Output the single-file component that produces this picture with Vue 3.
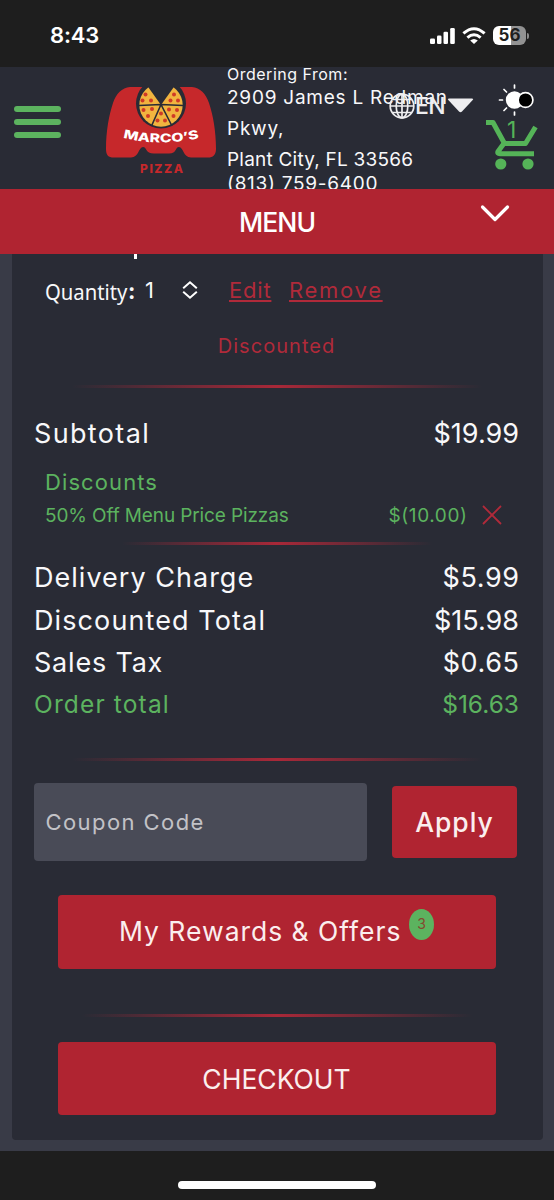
<script setup>
const charges = [
  { label: 'Delivery Charge', amount: '$5.99', cls: 'delivery' },
  { label: 'Discounted Total', amount: '$15.98', cls: 'discounted' },
  { label: 'Sales Tax', amount: '$0.65', cls: 'tax' },
]
const pepperoni = [
  [40.5, 8.5], [37.5, 14.5], [46, 14.5], [38.5, 24], [47, 23], [43, 30], [56, 27.5], [52.5, 34.5],
  [60, 34.5], [64, 23.5], [72, 24], [68.5, 30], [69, 8.5], [65.5, 14.5], [73, 14.5],
]
</script>

<template>
  <div class="screen">
    <div class="status">
      <span class="clock">8:43</span>
      <div class="status-icons">
        <svg class="signal" width="26" height="18" viewBox="0 0 26 18" fill="#fff">
          <rect x="0" y="11.5" width="5" height="5.5" rx="1.3" />
          <rect x="7" y="8.5" width="4.5" height="8.5" rx="1.3" />
          <rect x="13.5" y="4.8" width="4.5" height="12.2" rx="1.3" />
          <rect x="20.2" y="1" width="4.6" height="16" rx="1.3" />
        </svg>
        <svg class="wifi" width="24" height="18" viewBox="0 0 24 18" fill="none" stroke="#fff" stroke-width="3">
          <path d="M1.4 6.4Q12-3 22.6 6.4" />
          <path d="M5.4 10.6Q12 4.8 18.6 10.6" />
          <path d="M12 17l-3.8-3.6q3.8-3 7.6 0z" fill="#fff" stroke="none" />
        </svg>
        <div class="battery"><span>56</span></div>
        <i class="battery-tip"></i>
      </div>
    </div>

    <header class="header">
      <div class="burger"><i></i><i></i><i></i></div>
      <svg class="logo" width="112" height="94" viewBox="0 0 112 94">
        <path fill="#c6282b" d="M25 1H87C95 1.500 101 8 104 17C108 29 111 45 111 63C111 69 108 71.500 103 71.500H86C78 71.500 78.500 61 74 61C70 61 72 67.500 64 67.500H49C40 67.500 42 61 38 61C33.500 61 34 71.500 26 71.500H9C3 71.500 1 69 1 63C1 45 4 29 8 17C11 8 17 1.500 25 1Z" />
        <circle cx="56" cy="17.500" r="25" fill="#292b35" />
        <circle cx="56" cy="19" r="21.700" fill="#f1b43f" />
        <circle v-for="(p, i) in pepperoni" :key="i" :cx="p[0]" :cy="p[1]" r="2" fill="#cf3a26" />
        <path fill="#292b35" d="M56 19L41-2H71Z" />
        <path fill="none" stroke="#292b35" stroke-width="1.600" d="M34 19.500L56 18.500L78 19.500M56 18.500L46.500 40M56 18.500L67 40" />
        <path id="logo-arc" fill="none" d="M18 51.500Q56 61.500 96 51.500" />
        <text class="logo-name"><textPath href="#logo-arc" textLength="77" lengthAdjust="spacingAndGlyphs">MARCO’S</textPath></text>
        <text class="logo-sub" x="35" y="86.500" textLength="43" lengthAdjust="spacing">PIZZA</text>
      </svg>
      <div class="store">
        <div class="from">Ordering From:</div>
        <div class="street">2909 James L Redman<br />Pkwy,</div>
        <div class="city">Plant City, FL 33566</div>
        <div class="phone">(813) 759-6400</div>
      </div>

      <div class="lang">
        <svg width="26" height="26" viewBox="0 0 26 26" fill="none" stroke="#eeeef0" stroke-width="1.700">
          <circle cx="13" cy="13" r="11.800" />
          <ellipse cx="13" cy="13" rx="5.800" ry="11.800" />
          <path d="M13 1v24M1 13h24M3.500 6.500h19M3.500 19.500h19" />
        </svg>
        <span>EN</span>
        <svg width="27" height="15" viewBox="0 0 27 15"><path d="M2 .5H25Q27 .5 25.700 2L15 13.600Q13.500 15 12 13.600L1.300 2Q0 .5 2 .5Z" fill="#eeeef0" /></svg>
      </div>
      <svg class="theme" width="38" height="34" viewBox="0 0 38 34">
        <g stroke="#fff" stroke-width="1.700" stroke-linecap="round">
          <path d="M17.500 2v3M17.500 29v3M2.500 17h3M7 6.500l2.500 2.500M7 27.500l2.500-2.500" />
        </g>
        <circle cx="17.500" cy="17" r="8.700" fill="#fff" />
        <circle cx="28.500" cy="17" r="7.400" fill="#000" stroke="#fff" stroke-width="1.700" />
      </svg>
      <svg class="cart" width="54" height="52" viewBox="0 0 54 52">
        <g fill="none" stroke="#55b458" stroke-width="5">
          <path d="M1 4.500H8L19.500 25.500H40.500L50.500 9" stroke-linejoin="round" />
          <path d="M18.500 26L13 33.500Q12 35.800 15 35.800H49" />
        </g>
        <circle cx="15.800" cy="46" r="5.600" fill="#55b458" />
        <circle cx="43" cy="46" r="5.600" fill="#55b458" />
      </svg>
      <span class="count">1</span>
    </header>

    <nav class="menu">
      <span>MENU</span>
      <svg width="30" height="20" viewBox="0 0 30 20" fill="none" stroke="#fff" stroke-width="3.200" stroke-linecap="round" stroke-linejoin="round"><path d="M2.500 3L15 15.500L27.500 3" /></svg>
    </nav>

    <main class="page">
      <section class="card">
        <i class="descender"></i>
        <div class="item">
          <span class="qty-label"><span>Quantity</span></span><b>:</b>
          <span class="qty">1</span>
          <svg class="sorter" width="16" height="20" viewBox="0 0 16 20" fill="none" stroke="#fff" stroke-width="2"><path d="M1.200 8.300L8 2.300L14.800 8.300M1.200 11.700L8 17.700L14.800 11.700" /></svg>
          <a class="edit">Edit</a>
          <a class="remove">Remove</a>
        </div>
        <div class="flag">Discounted</div>
        <hr class="rule" />
        <div class="row subtotal"><span>Subtotal</span><span class="amount">$19.99</span></div>
        <div class="discounts">Discounts</div>
        <div class="discount">
          <span class="offer">50% Off Menu Price Pizzas</span>
          <span class="off">$(10.00)</span>
          <svg width="20" height="20" viewBox="0 0 20 20" stroke="#b02a3a" stroke-width="1.800"><path d="M1 1L19 19M19 1L1 19" /></svg>
        </div>
        <hr class="rule short" />
        <div v-for="c in charges" :key="c.label" class="row" :class="c.cls">
          <span>{{ c.label }}</span><span class="amount">{{ c.amount }}</span>
        </div>
        <div class="row total"><span>Order total</span><span class="amount">$16.63</span></div>
        <hr class="rule second" />
        <div class="coupon">
          <div class="field">Coupon Code</div>
          <button class="apply">Apply</button>
        </div>
        <button class="wide rewards">My Rewards &amp; Offers<span class="badge">3</span></button>
        <hr class="rule third" />
        <button class="wide checkout">CHECKOUT</button>
      </section>
    </main>
    <footer class="home"><i></i></footer>
  </div>
</template>

<style>
body { margin: 0; background: #1e1e1e; }
</style>

<style scoped>
.screen { width: 554px; height: 1200px; overflow: hidden; font-family: Inter, "Liberation Sans", sans-serif; color: #f8f8fa; display: flex; flex-direction: column; background: #1e1e1e; }
.status { height: 67px; flex: none; display: flex; justify-content: space-between; box-sizing: border-box; padding: 0 25px 0 50px; }
.clock { font-size: 22px; font-weight: 600; line-height: 71px; letter-spacing: -.2px; color: #fff; }
.status-icons { display: flex; align-items: center; padding-top: 4px; }
.signal { margin-right: 6px; }
.wifi { margin-right: 7px; }
.battery { width: 33px; height: 19px; border-radius: 6px; background: linear-gradient(90deg, #fff 56%, #929292 56%); color: #1e1e1e; font-size: 17px; font-weight: 700; line-height: 19px; text-align: center; }
.battery-tip { width: 2px; height: 6px; margin-left: 1px; border-radius: 0 3px 3px 0; background: #8b8b8b; }

.header { position: relative; height: 122px; flex: none; overflow: hidden; background: #292b35; display: flex; align-items: flex-start; }
.burger { width: 47px; margin: 39px 44px 0 14px; display: flex; flex-direction: column; gap: 6.500px; }
.burger i { height: 6.300px; border-radius: 3px; background: #5cb35f; }
.logo { margin-top: 19px; flex: none; }
.logo-name { font: 800 12px Inter, sans-serif; fill: #fff; }
.logo-sub { font: 800 12px Inter, sans-serif; fill: #c6282b; }
.store { margin-left: 10px; white-space: nowrap; font-size: 19px; line-height: 31px; }
.from { font-size: 16px; line-height: 14px; letter-spacing: .5px; margin-bottom: .5px; }
.street { letter-spacing: .76px; }
.city { letter-spacing: .22px; }
.phone { line-height: 18px; letter-spacing: .72px; }
.lang { position: absolute; left: 389px; top: 26px; display: flex; align-items: center; height: 26px; color: #eeeef0; }
.lang span { font-size: 23px; font-weight: 500; width: 32px; line-height: 26px; letter-spacing: -.5px; }
.lang svg:last-child { margin-top: -1px; }
.theme { position: absolute; left: 496.500px; top: 16px; }
.cart { position: absolute; left: 485px; top: 51px; }
.count { position: absolute; left: 507px; top: 48px; font-size: 23px; line-height: 30px; color: #55b458; }

.menu { position: relative; height: 65px; flex: none; background: #b02431; color: #fff; text-align: center; font-size: 26.500px; font-weight: 500; line-height: 66px; letter-spacing: -.9px; }
.menu svg { position: absolute; left: 480px; top: 15px; }

.page { height: 897px; flex: none; background: #393b47; }
.card { position: relative; box-sizing: border-box; width: 531px; height: 886px; margin-left: 11.500px; padding: 0 23.500px 0 22.500px; background: #292b35; border-radius: 0 0 4px 4px; display: flex; flex-direction: column; }
.descender { position: absolute; left: 122px; top: 0; width: 3px; height: 5px; background: #fff; }
.item { height: 72px; display: flex; align-items: center; padding-left: 11px; font-size: 22px; }
.qty-label { width: 83px; font-family: "Noto Sans", sans-serif; font-size: 22.500px; margin-top: 3px; }
.qty-label span { display: inline-block; transform: scaleX(.9); transform-origin: left; }
.item b { width: 17px; font-weight: 700; line-height: 30px; margin-top: 1px; }
.qty { width: 37px; }
.sorter { margin-right: 31px; }
.edit, .remove { color: #b02a3a; text-decoration: underline; text-decoration-thickness: 1.500px; text-underline-offset: 2px; }
.edit { width: 42px; margin-right: 18px; letter-spacing: .8px; white-space: nowrap; }
.remove { letter-spacing: 1.700px; }
.flag { height: 39px; line-height: 41px; text-align: center; font-size: 20px; letter-spacing: 1.050px; color: #b02a3a; }
.rule { width: 410px; height: 3px; flex: none; margin: 20px auto 23px; border: 0; background: linear-gradient(90deg, rgba(176, 36, 54, 0), #a82838 50%, rgba(176, 36, 54, 0)); }
.row { height: 42.500px; flex: none; display: flex; justify-content: space-between; align-items: center; font-size: 27px; line-height: 40px; white-space: nowrap; }
.row span { position: relative; top: 1px; }
.subtotal { height: 43px; letter-spacing: 1.350px; }
.row .amount { letter-spacing: 0; }
.discounts { height: 33px; margin-top: 12px; padding-left: 11px; line-height: 33px; font-size: 22px; letter-spacing: 1.100px; color: #5cb35f; }
.discount { height: 32px; display: flex; align-items: center; padding-left: 11px; font-size: 19px; color: #5cb35f; white-space: nowrap; }
.offer { width: 343.500px; letter-spacing: -.12px; }
.off { width: 93.500px; letter-spacing: .6px; }
.short { width: 310px; margin: 11px auto; }
.delivery { letter-spacing: 1.020px; }
.discounted { letter-spacing: 1.100px; }
.tax { letter-spacing: .8px; }
.delivery .amount, .tax .amount { letter-spacing: .6px; margin-right: -.6px; }
.total { height: 39px; font-size: 24.500px; letter-spacing: 1.150px; color: #5cb35f; }
.second { margin: 35.500px auto 22px; }
.coupon { display: flex; align-items: center; justify-content: space-between; height: 78px; padding-right: 2px; }
.field { box-sizing: border-box; width: 333px; height: 78px; padding-left: 11.500px; border-radius: 4px; background: #494b57; color: #c2c2c7; font-size: 22px; line-height: 78px; letter-spacing: 1.420px; }
button { display: block; border: 0; padding: 0; border-radius: 4px; background: #b02431; color: #fbeeee; font-family: inherit; font-size: 26.500px; }
.apply { width: 125px; height: 72px; line-height: 73px; letter-spacing: 1px; font-weight: 500; }
.wide { width: 438px; margin: 0 auto; flex: none; }
.rewards { display: flex; justify-content: center; height: 74px; margin-top: 34px; line-height: 73px; letter-spacing: .98px; }
.badge { width: 25px; height: 31px; margin: 14px 0 0 7.500px; border-radius: 50%; background: #5cb35f; color: #84492f; font-size: 14px; line-height: 29px; text-align: center; letter-spacing: 0; }
.third { width: 390px; margin: 45px auto 25px; }
.checkout { height: 73px; line-height: 74px; }
.home { flex: 1; display: flex; justify-content: center; }
.home i { width: 198px; height: 8px; margin-top: 30px; border-radius: 4px; background: #fff; }
</style>
